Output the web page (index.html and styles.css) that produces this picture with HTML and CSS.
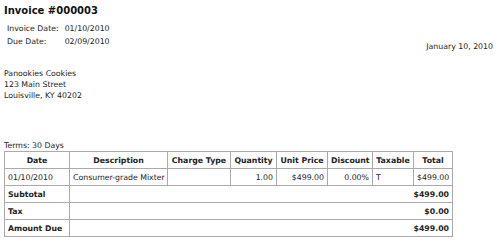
FILE: index.html
```html
<!DOCTYPE html>
<html>
<head>
<meta charset="utf-8">
<link rel="stylesheet" href="styles.css">
</head>
<body>
<div class="page">
  <h1 class="title">Invoice #000003</h1>
  <div class="top">
    <table class="dates">
      <tr><td class="dl">Invoice Date:</td><td>01/10/2010</td></tr>
      <tr><td class="dl">Due Date:</td><td>02/09/2010</td></tr>
    </table>
    <div class="today">January 10, 2010</div>
  </div>
  <div class="address">
    <div>Panookies Cookies</div>
    <div>123 Main Street</div>
    <div>Louisville, KY 40202</div>
  </div>
  <div class="terms">Terms: 30 Days</div>
  <table class="items">
    <colgroup>
      <col class="c-date">
      <col class="c-desc">
      <col class="c-type">
      <col class="c-qty">
      <col class="c-price">
      <col class="c-disc">
      <col class="c-tax">
      <col class="c-total">
    </colgroup>
    <thead>
      <tr>
        <th>Date</th>
        <th>Description</th>
        <th>Charge Type</th>
        <th>Quantity</th>
        <th>Unit Price</th>
        <th>Discount</th>
        <th>Taxable</th>
        <th>Total</th>
      </tr>
    </thead>
    <tbody>
      <tr>
        <td>01/10/2010</td>
        <td>Consumer-grade Mixter</td>
        <td></td>
        <td class="num">1.00</td>
        <td class="num">$499.00</td>
        <td class="num">0.00%</td>
        <td>T</td>
        <td class="num">$499.00</td>
      </tr>
      <tr class="sum"><th class="lbl">Subtotal</th><td colspan="7" class="num">$499.00</td></tr>
      <tr class="sum"><th class="lbl">Tax</th><td colspan="7" class="num">$0.00</td></tr>
      <tr class="sum"><th class="lbl">Amount Due</th><td colspan="7" class="num">$499.00</td></tr>
    </tbody>
  </table>
</div>
</body>
</html>
```
FILE: styles.css
```css
html, body {
  margin: 0;
  padding: 0;
  background: #fff;
}
body {
  font-family: "DejaVu Sans", sans-serif;
  font-size: 7.8px;
  color: #222;
  white-space: nowrap;
}
.page {
  padding: 4px 4px 0 4px;
}
.title {
  margin: 0;
  font-size: 10px;
  font-weight: bold;
  color: #111;
  line-height: 14px;
}
.top {
  display: flex;
  justify-content: space-between;
  align-items: flex-end;
  margin-top: 4px;
}
.dates {
  border-collapse: collapse;
}
.dates td {
  padding: 0 3px;
  height: 13px;
  line-height: 13px;
}
.dates td.dl {
  width: 50px;
}
.today {
  margin-right: 3px;
  margin-bottom: -4px;
  line-height: 11px;
}
.address {
  margin-top: 20px;
  line-height: 11px;
}
.terms {
  margin-top: 39px;
  line-height: 11px;
}
.items {
  border-collapse: collapse;
  table-layout: fixed;
  width: 448px;
  margin-top: 0;
}
.items th, .items td {
  border: 1px solid #aaa;
  padding: 0 3px;
  height: 16px;
  line-height: 11px;
  text-align: left;
  overflow: hidden;
}
.items thead th {
  text-align: center;
}
.items th {
  font-weight: bold;
}
.items td.num {
  text-align: right;
}
.items .sum td {
  font-weight: bold;
}
.c-date { width: 65px; }
.c-desc { width: 98px; }
.c-type { width: 63px; }
.c-qty { width: 46px; }
.c-price { width: 51px; }
.c-disc { width: 45px; }
.c-tax { width: 41px; }
.c-total { width: 39px; }
```
